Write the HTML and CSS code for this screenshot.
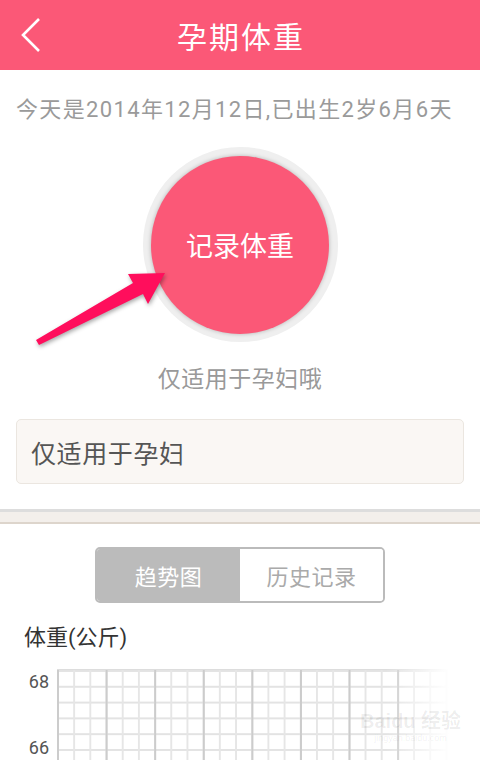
FILE: index.html
```html
<!DOCTYPE html>
<html lang="zh-CN">
<head>
    <meta charset="UTF-8">
    <meta name="viewport" content="width=device-width, initial-scale=1.0">
    <title>孕期体重</title>
    <link rel="stylesheet" href="styles.css">
</head>
<body>
    <header class="top-bar">
        <a class="back" href="#">
            <svg width="24" height="36" viewBox="0 0 24 36">
                <polyline points="18,2 2,18 18,34" fill="none" stroke="#fff" stroke-width="2.6"/>
            </svg>
        </a>
        <h1>孕期体重</h1>
    </header>

    <main class="page">
        <p class="today">今天是2014年12月12日,已出生2岁6月6天</p>

        <div class="record">
            <button class="record-btn">记录体重</button>
        </div>

        <p class="hint">仅适用于孕妇哦</p>

        <div class="note">仅适用于孕妇</div>

        <div class="divider"></div>

        <div class="tabs">
            <span class="tab active">趋势图</span>
            <span class="tab">历史记录</span>
        </div>

        <h2 class="chart-title">体重(公斤)</h2>

        <div class="chart">
            <div class="axis">
                <span>68</span>
                <span>66</span>
            </div>
            <div class="grid"></div>
        </div>

        <!-- flèche d'annotation par-dessus le bouton -->
        <svg class="arrow" width="160" height="90" viewBox="0 0 160 90">
            <polygon points="16,78 113,21 108,12 145,11 128,42 123,32 19,83" fill="#ff0e5c"/>
        </svg>

        <div class="watermark">
            <span class="wm-big">Bai<i>du</i> 经验</span>
            <span class="wm-small">jingyan.baidu.com</span>
        </div>
    </main>
</body>
</html>
```

FILE: styles.css
```css
* {
    margin: 0;
    padding: 0;
    box-sizing: border-box;
}

body {
    font-family: 'Roboto', 'Noto Sans CJK SC', sans-serif;
    background: #fff;
    color: #333;
    width: 480px;
    overflow: hidden;
}

.top-bar {
    height: 70px;
    background-color: #fb5877;
    display: flex;
    align-items: center;
    justify-content: center;
    position: relative;
}

.back {
    position: absolute;
    left: 21px;
    top: 17px;
    display: block;
}

.top-bar h1 {
    color: #fff;
    font-size: 30px;
    font-weight: normal;
    letter-spacing: 2px;
    padding-left: 2px;
}

.page {
    position: relative;
}

.today {
    padding-top: 25px;
    padding-left: 16px;
    line-height: 30px;
    font-size: 22px;
    color: #9a9a9a;
    letter-spacing: 1.35px;
}

/* bouton rond */
.record {
    width: 195px;
    height: 195px;
    margin: 22px auto 0;
    border-radius: 50%;
    background-color: #efefef;
    display: flex;
    align-items: center;
    justify-content: center;
}

.record-btn {
    width: 178px;
    height: 178px;
    border-radius: 50%;
    border: none;
    background-color: #fb5877;
    box-shadow: 0 0 4px rgba(0, 0, 0, 0.25);
    color: #fff;
    font-family: inherit;
    font-size: 27px;
}

.hint {
    margin-top: 23px;
    line-height: 30px;
    text-align: center;
    font-size: 23px;
    letter-spacing: 0.5px;
    color: #999;
}

.note {
    margin: 24px 16px 0;
    height: 65px;
    background-color: #faf7f4;
    border: 1px solid #ebe6e0;
    border-radius: 5px;
    padding-left: 14px;
    display: flex;
    align-items: center;
    font-size: 25px;
    letter-spacing: 0.6px;
    color: #555;
}

.divider {
    margin-top: 25px;
    height: 15px;
    border-top: 3px solid #dddddd;
    border-bottom: 2px solid #ddd5cc;
    background-color: #f3efeb;
}

.tabs {
    width: 290px;
    height: 56px;
    margin: 23px auto 0;
    display: flex;
    border: 2px solid #bbb;
    border-radius: 5px;
    overflow: hidden;
}

.tab {
    flex: 1;
    display: flex;
    align-items: center;
    justify-content: center;
    font-size: 22px;
    letter-spacing: 0.5px;
    color: #aaa;
    background-color: #fff;
}

.tab.active {
    background-color: #bbb;
    color: #fff;
}

.chart-title {
    margin-top: 20px;
    padding-left: 24px;
    line-height: 30px;
    font-size: 22px;
    font-weight: normal;
    color: #333;
}

.chart {
    display: flex;
    margin-top: 16px;
    height: 100px;
}

.axis {
    width: 57px;
    padding-right: 8px;
    display: flex;
    flex-direction: column;
    align-items: flex-end;
    gap: 44px;
    padding-top: 2px;
    font-size: 18px;
    color: #555;
}

.axis span {
    line-height: 22px;
}

.grid {
    width: 392px;
    height: 100%;
    background-image:
        linear-gradient(to right, #cccccc 2px, transparent 2px),
        linear-gradient(to right, #e6e6e6 2px, transparent 2px),
        linear-gradient(to bottom, #e3e3e3 2px, transparent 2px);
    background-size: 48.6px 100%, 16.2px 100%, 100% 15.8px;
    border-top: 1px solid #ddd;
    -webkit-mask-image: linear-gradient(to right, #000 84%, transparent 100%);
    mask-image: linear-gradient(to right, #000 84%, transparent 100%);
}

.arrow {
    position: absolute;
    left: 20px;
    top: 192px;
    filter: drop-shadow(1px 2px 2px rgba(0, 0, 0, 0.35));
}

.watermark {
    position: absolute;
    left: 360px;
    top: 640px;
    display: flex;
    flex-direction: column;
    align-items: center;
    color: rgba(0, 0, 0, 0.07);
    font-family: 'Liberation Sans', 'Noto Sans CJK SC', sans-serif;
}

.wm-big {
    font-size: 20px;
    font-weight: bold;
    line-height: 22px;
}

.wm-big i {
    font-style: normal;
}

.wm-small {
    font-size: 9px;
    line-height: 12px;
}
```
